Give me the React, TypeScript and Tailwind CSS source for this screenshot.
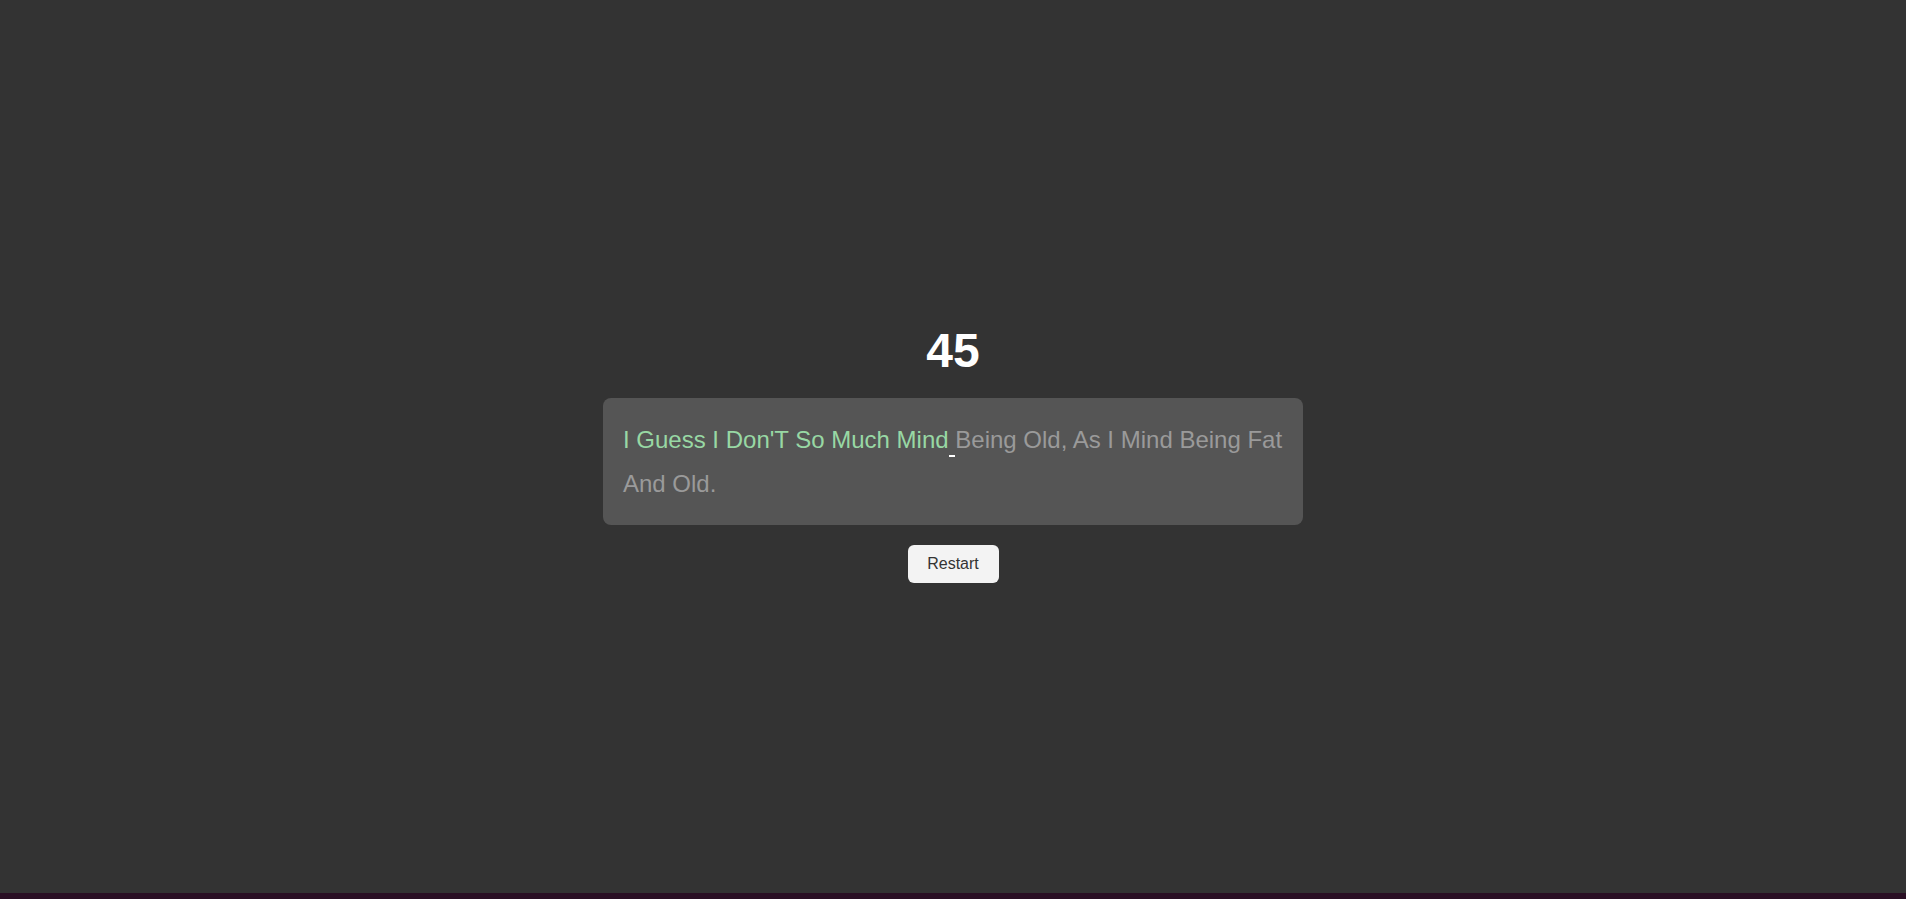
import React, { useState } from "react";

const QUOTE =
  "I Guess I Don'T So Much Mind Being Old, As I Mind Being Fat And Old.";

const App: React.FC = () => {
  const [typed] = useState(28);
  const [timeLeft] = useState(45);

  const done = QUOTE.slice(0, typed);
  const current = QUOTE.charAt(typed);
  const rest = QUOTE.slice(typed + 1);

  return (
    <div className="w-screen min-h-screen bg-[#2a0f24] font-['Liberation_Sans',Arial,sans-serif]">
      <div className="h-[893px] bg-[#333333] flex flex-col items-center justify-center gap-5 pt-[13px]">
        <h1 className="text-[48px] font-bold text-white leading-[1.15]">
          {timeLeft}
        </h1>

        <div className="w-[700px] bg-[#555555] rounded-lg p-5 text-2xl leading-[1.8]">
          <span className="text-[#98d8a4]">{done}</span>
          <span className="text-[#9a9a9a] border-b-2 border-white pb-[2px]">
            {current}
          </span>
          <span className="text-[#9a9a9a]">{rest}</span>
        </div>

        <button
          type="button"
          className="w-[91px] h-[38px] bg-[#f3f3f3] text-[#333333] text-base rounded-md"
        >
          Restart
        </button>
      </div>
    </div>
  );
};

export default App;
